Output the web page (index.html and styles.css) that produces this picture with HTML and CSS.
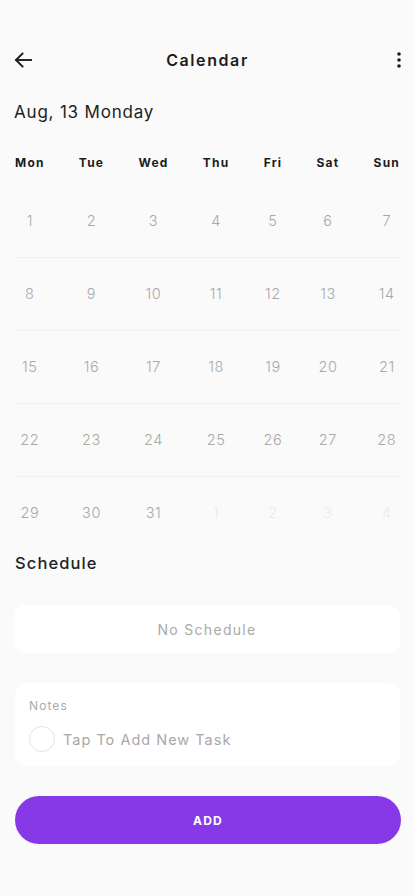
FILE: index.html
```html
<!DOCTYPE html>
<html lang="en">
<head>
<meta charset="utf-8">
<meta name="viewport" content="width=device-width, initial-scale=1">
<title>Calendar</title>
<link rel="stylesheet" href="styles.css">
</head>
<body>
<div class="page">
  <header class="topbar">
    <button class="icon-btn" aria-label="Back">
      <svg width="18" height="16" viewBox="0 0 18 16" fill="none" stroke="#1c1c1c" stroke-width="1.9" stroke-linecap="square"><path d="M17 8H2.5"/><path d="M8.5 1.5L2 8l6.5 6.5"/></svg>
    </button>
    <h1 class="title">Calendar</h1>
    <button class="icon-btn" aria-label="More">
      <svg width="4" height="16" viewBox="0 0 4 16" fill="#1c1c1c"><circle cx="2" cy="2" r="1.8"/><circle cx="2" cy="8" r="1.8"/><circle cx="2" cy="14" r="1.8"/></svg>
    </button>
  </header>

  <div class="date">Aug, 13 Monday</div>

  <div class="cal">
    <div class="wd">Mon</div><div class="wd">Tue</div><div class="wd">Wed</div><div class="wd">Thu</div><div class="wd">Fri</div><div class="wd">Sat</div><div class="wd">Sun</div>
    <div class="d">1</div><div class="d">2</div><div class="d">3</div><div class="d">4</div><div class="d">5</div><div class="d">6</div><div class="d">7</div>
    <div class="sep"></div>
    <div class="d">8</div><div class="d">9</div><div class="d">10</div><div class="d">11</div><div class="d">12</div><div class="d">13</div><div class="d">14</div>
    <div class="sep"></div>
    <div class="d">15</div><div class="d">16</div><div class="d">17</div><div class="d">18</div><div class="d">19</div><div class="d">20</div><div class="d">21</div>
    <div class="sep"></div>
    <div class="d">22</div><div class="d">23</div><div class="d">24</div><div class="d">25</div><div class="d">26</div><div class="d">27</div><div class="d">28</div>
    <div class="sep"></div>
    <div class="d">29</div><div class="d">30</div><div class="d">31</div><div class="d other">1</div><div class="d other">2</div><div class="d other">3</div><div class="d other">4</div>
  </div>

  <h2 class="section">Schedule</h2>

  <div class="card empty">No Schedule</div>

  <div class="card notes">
    <div class="notes-label">Notes</div>
    <div class="task">
      <span class="check"></span>
      <span class="task-text">Tap To Add New Task</span>
    </div>
  </div>

  <button class="add-btn">ADD</button>
</div>
</body>
</html>
```

FILE: styles.css
```css
* { box-sizing: border-box; }

html, body {
  margin: 0;
  padding: 0;
  background: #fafafa;
}

body {
  font-family: Inter, "Open Sans", "Liberation Sans", sans-serif;
  color: #1c1c1c;
}

.page {
  width: 414px;
  padding: 0 14px 0 14px;
}

.topbar {
  margin-top: 44px;
  height: 32px;
  display: flex;
  align-items: center;
  justify-content: space-between;
}

.icon-btn {
  background: none;
  border: 0;
  padding: 0;
  width: 18px;
  height: 20px;
  display: flex;
  align-items: center;
  justify-content: flex-start;
}

.icon-btn:last-child {
  justify-content: flex-end;
  width: 18px;
  margin-right: -1px;
}

.title {
  margin: 0;
  font-size: 16px;
  font-weight: 600;
  letter-spacing: 1.6px;
  color: #1c1c1c;
}

.date {
  margin-top: 24px;
  height: 24px;
  line-height: 24px;
  font-size: 17px;
  font-weight: 400;
  letter-spacing: 0.8px;
  color: #222;
}

.cal {
  margin-top: 29px;
  padding-left: 1px;
  display: grid;
  grid-template-columns: repeat(7, auto);
  justify-content: space-between;
}

.wd {
  height: 20px;
  line-height: 20px;
  font-size: 12px;
  font-weight: 700;
  letter-spacing: 1.2px;
  color: #1c1c1c;
  text-align: center;
  margin-bottom: 12px;
}

.d {
  height: 72px;
  line-height: 72px;
  text-align: center;
  font-size: 14.5px;
  font-weight: 300;
  letter-spacing: 0.6px;
  color: #a8a8a8;
}

.d.other {
  color: #ebebeb;
}

.sep {
  grid-column: 1 / -1;
  height: 1px;
  background: #f2f2f2;
}

.section {
  margin: 2px 0 0 1px;
  height: 24px;
  line-height: 24px;
  font-size: 16.5px;
  font-weight: 500;
  letter-spacing: 1.1px;
  color: #222;
}

.card {
  background: #fff;
  border-radius: 12px;
  margin-top: 30px;
  margin-right: 0;
}

.empty {
  height: 48px;
  display: flex;
  align-items: center;
  justify-content: center;
  font-size: 14px;
  letter-spacing: 1.3px;
  color: #a8a8a8;
}

.notes {
  height: 83px;
  margin-left: 1px;
  padding: 14px 14px 14px 14px;
}

.notes-label {
  height: 18px;
  line-height: 18px;
  font-size: 12px;
  letter-spacing: 1.1px;
  color: #ababab;
}

.task {
  margin-top: 11px;
  height: 26px;
  display: flex;
  align-items: center;
  gap: 8px;
}

.check {
  width: 26px;
  height: 26px;
  border-radius: 50%;
  border: 1px solid #e3e3e3;
  flex: none;
}

.task-text {
  font-size: 14.5px;
  letter-spacing: 1.0px;
  color: #a8a8a8;
}

.add-btn {
  display: block;
  margin-top: 30px;
  margin-left: 1px;
  width: 386px;
  height: 48px;
  border: 0;
  border-radius: 24px;
  background: #8739e8;
  color: #fff;
  font-family: inherit;
  font-size: 12px;
  font-weight: 700;
  letter-spacing: 1.3px;
}
```
